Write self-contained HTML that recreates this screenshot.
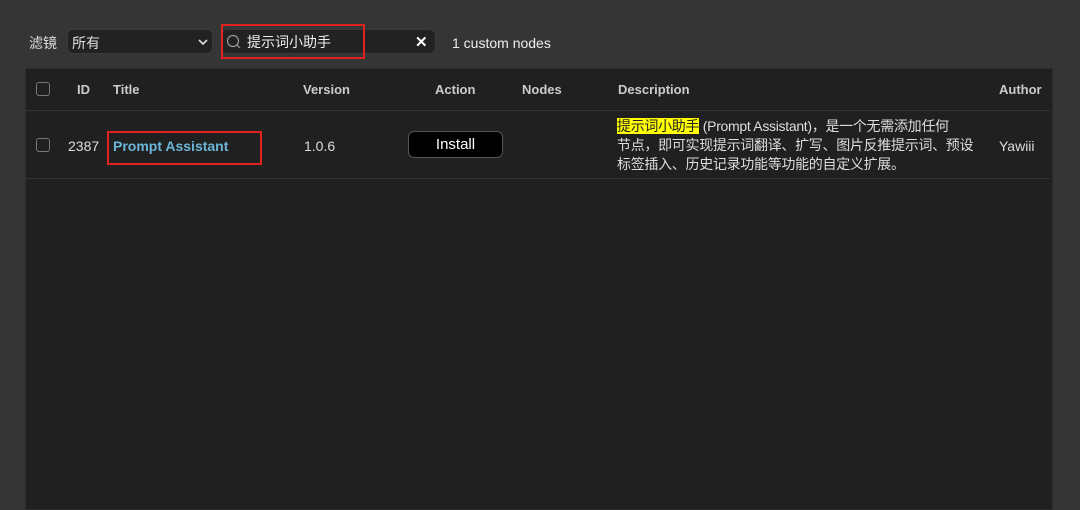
<!DOCTYPE html><html><head><meta charset="utf-8"><style>
body{margin:0;width:1080px;height:498px;background:#353535;position:relative;overflow:hidden;font-family:"Liberation Sans","Noto Sans CJK SC",sans-serif;color:#ddd;font-size:14px}
.a{position:absolute;white-space:nowrap}
.b{font-weight:bold;font-size:13px;color:#ccc}
.cb{position:absolute;width:12px;height:12px;border:1px solid #777;border-radius:3px}
</style></head><body>
<div class="a" style="left:29px;top:33px;font-size:14px;color:#ddd">滤镜</div>
<div class="a" style="left:67px;top:29px;width:146px;height:25px;background:#222;border:1px solid #3a3a3a;border-radius:6px;box-sizing:border-box"></div>
<div class="a" style="left:72px;top:33px">所有</div>
<svg class="a" style="left:198px;top:38px" width="10" height="8"><path d="M1 2l4 4 4-4" stroke="#ddd" stroke-width="1.6" fill="none"/></svg>
<div class="a" style="left:221px;top:29px;width:215px;height:25px;background:#222;border:1px solid #3a3a3a;border-radius:6px;box-sizing:border-box"></div>
<svg class="a" style="left:226px;top:34px" width="15" height="15"><circle cx="7" cy="7" r="5.5" stroke="#999" stroke-width="1.2" fill="none"/><path d="M11 11l3 3" stroke="#999" stroke-width="1.2"/></svg>
<div class="a" style="left:247px;top:32px;color:#eee">提示词小助手</div>
<div class="a" style="left:415px;top:33px;color:#fff;font-weight:bold;font-size:15px">✕</div>
<div class="a" style="left:221px;top:24px;width:140px;height:31px;border:2px solid #e12222"></div>
<div class="a" style="left:452px;top:35px;color:#eee;font-size:14px">1 custom nodes</div>
<div class="a" style="left:25px;top:68px;width:1026px;height:440px;background:#202020;border:1px solid #2c2c2c"></div>
<div class="a" style="left:26px;top:110px;width:1024px;height:1px;background:#333"></div>
<div class="a" style="left:26px;top:178px;width:1024px;height:1px;background:#333"></div>
<div class="cb" style="left:36px;top:82px"></div>
<div class="a b" style="left:77px;top:82px">ID</div>
<div class="a b" style="left:113px;top:82px">Title</div>
<div class="a b" style="left:303px;top:82px">Version</div>
<div class="a b" style="left:435px;top:82px">Action</div>
<div class="a b" style="left:522px;top:82px">Nodes</div>
<div class="a b" style="left:618px;top:82px">Description</div>
<div class="a b" style="left:999px;top:82px">Author</div>
<div class="cb" style="left:36px;top:138px"></div>
<div class="a" style="left:68px;top:138px">2387</div>
<div class="a" style="left:113px;top:138px;color:#6bb5d9;font-weight:bold;font-size:14px">Prompt Assistant</div>
<div class="a" style="left:107px;top:131px;width:151px;height:30px;border:2px solid #e12222"></div>
<div class="a" style="left:304px;top:138px">1.0.6</div>
<div class="a" style="left:408px;top:131px;width:95px;height:27px;background:#000;border:1px solid #555;border-radius:6px;box-sizing:border-box;color:#fff;text-align:center;line-height:25px;font-size:15px">Install</div>
<div class="a" style="left:617px;top:117px;font-size:14px;line-height:19px;color:#ddd;letter-spacing:-0.3px"><span style="background:#ffff00;color:#222">提示词小助手</span> (Prompt Assistant)，是一个无需添加任何<br>节点，即可实现提示词翻译、扩写、图片反推提示词、预设<br>标签插入、历史记录功能等功能的自定义扩展。</div>
<div class="a" style="left:999px;top:138px">Yawiii</div>
</body></html>
